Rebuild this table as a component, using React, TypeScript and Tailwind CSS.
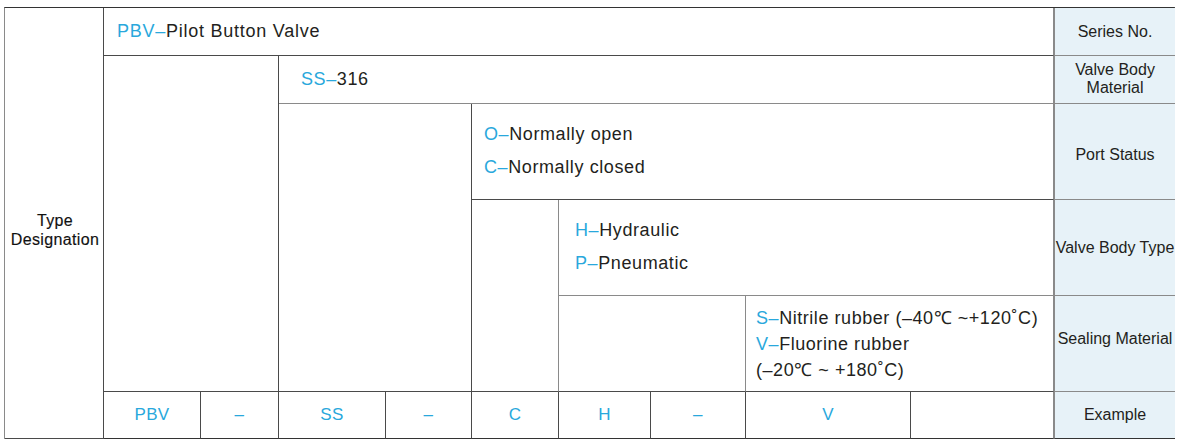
import React from "react";

const B = "text-[#29a8dc]";

function Cell({ className = "", children }: { className?: string; children?: React.ReactNode }) {
  return <div className={`border-r border-b border-[#4a4a4a] ${className}`}>{children}</div>;
}

function Label({ className = "", children }: { className?: string; children?: React.ReactNode }) {
  return (
    <div
      className={`col-start-11 border-b border-l border-[#8a8a8a] bg-[#e7f2f8] flex items-center justify-center text-center text-[16px] leading-[18px] text-[#231f20] whitespace-nowrap ${className}`}
    >
      {children}
    </div>
  );
}

export default function App() {
  return (
    <div className="w-[1180px] h-[446px] bg-white font-['Liberation_Sans',Arial,sans-serif] text-[#231f20]">
      <div className="pt-[7px] pl-[4px]">
        <div className="grid grid-cols-[99px_97px_78px_107px_86px_87px_92px_95px_165px_143px_121px] grid-rows-[48px_48px_96px_96px_96px_47px] border-t border-l border-t-[#333] border-l-[#8a8a8a] border-r border-r-[#555] w-[1171px]">
          {/* Type designation */}
          <Cell className="col-start-1 row-start-1 row-span-6 flex items-center justify-center text-center text-[16px] leading-[19px] tracking-[0.35px] text-[#111] pt-[13px] [-webkit-text-stroke:0.15px_#111]">
            <div className="pl-[2px]">
              Type
              <br />
              Designation
            </div>
          </Cell>

          {/* Row 1 */}
          <Cell className="col-start-2 col-span-9 row-start-1 flex items-center pl-[13px] text-[18px] tracking-[0.75px] border-r-[#8a8a8a]">
            <span>
              <span className={B}>PBV–</span>Pilot Button Valve
            </span>
          </Cell>
          <Label className="row-start-1 pt-[1px]">Series No.</Label>

          {/* Row 2 */}
          <Cell className="col-start-2 col-span-2 row-start-2 row-span-4" />
          <Cell className="col-start-4 col-span-7 row-start-2 flex items-center pl-[22px] text-[18px] tracking-[0.6px] border-b-[#8a8a8a] border-r-[#8a8a8a]">
            <span>
              <span className={B}>SS–</span>316
            </span>
          </Cell>
          <Label className="row-start-2 flex-col pb-[2px]">
            <span>Valve Body</span>
            <span>Material</span>
          </Label>

          {/* Row 3 */}
          <Cell className="col-start-4 col-span-2 row-start-3 row-span-3" />
          <Cell className="col-start-6 col-span-5 row-start-3 flex flex-col justify-center pl-[12px] text-[18px] leading-[33px] tracking-[0.6px] pb-[1px] border-r-[#8a8a8a]">
            <div>
              <span className={B}>O–</span>Normally open
            </div>
            <div>
              <span className={B}>C–</span>Normally closed
            </div>
          </Cell>
          <Label className="row-start-3 pt-[6px]">Port Status</Label>

          {/* Row 4 */}
          <Cell className="col-start-6 row-start-4 row-span-2 border-r-[#8a8a8a]" />
          <Cell className="col-start-7 col-span-4 row-start-4 flex flex-col justify-center pl-[16px] text-[18px] leading-[33px] tracking-[0.6px] pb-[1px] border-b-[#8a8a8a] border-r-[#8a8a8a]">
            <div>
              <span className={B}>H–</span>Hydraulic
            </div>
            <div>
              <span className={B}>P–</span>Pneumatic
            </div>
          </Cell>
          <Label className="row-start-4">Valve Body Type</Label>

          {/* Row 5 */}
          <Cell className="col-start-7 col-span-2 row-start-5 border-r-[#8a8a8a]" />
          <Cell className="col-start-9 col-span-2 row-start-5 flex flex-col justify-center pl-[10px] text-[18px] leading-[26px] tracking-[0.55px] border-r-[#8a8a8a] whitespace-nowrap">
            <div>
              <span className={B}>S–</span>Nitrile rubber (–40℃ ~+120˚C)
            </div>
            <div>
              <span className={B}>V–</span>Fluorine rubber
            </div>
            <div>(–20℃ ~ +180˚C)</div>
          </Cell>
          <Label className="row-start-5 pb-[9px]">Sealing Material</Label>

          {/* Row 6 */}
          {[
            ["col-start-2", "PBV"],
            ["col-start-3", "–"],
            ["col-start-4", "SS"],
            ["col-start-5", "–"],
            ["col-start-6", "C"],
            ["col-start-7", "H"],
            ["col-start-8", "–"],
            ["col-start-9", "V"],
            ["col-start-10", ""],
          ].map(([c, t], i) => (
            <Cell
              key={i}
              className={`${c} row-start-6 flex items-center justify-center text-[17px] tracking-[0.3px] ${B} border-b-[#333] ${i === 8 ? "border-r-[#8a8a8a]" : ""}`}
            >
              {t}
            </Cell>
          ))}
          <Label className="row-start-6 border-b-[#333]">Example</Label>
        </div>
      </div>
    </div>
  );
}
